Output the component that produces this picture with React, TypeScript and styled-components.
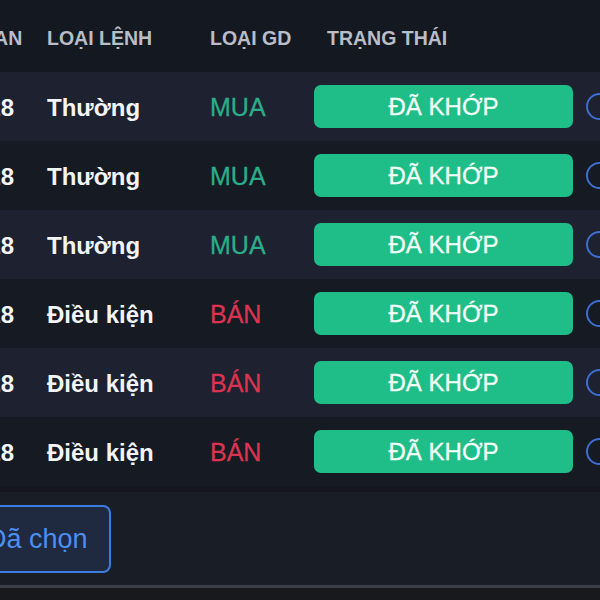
import styled, { createGlobalStyle } from 'styled-components';

const GlobalStyle = createGlobalStyle`
    html, body {
        margin: 0;
        padding: 0;
        background: #161a23;
        overflow: hidden;
    }
    * {
        box-sizing: border-box;
    }
`;

type Side = 'buy' | 'sell';

interface Order {
    time: string;
    kind: string;
    side: Side;
    status: string;
}

const orders: Order[] = [
    { time: '14:30:28', kind: 'Thường', side: 'buy', status: 'ĐÃ KHỚP' },
    { time: '14:30:28', kind: 'Thường', side: 'buy', status: 'ĐÃ KHỚP' },
    { time: '14:30:28', kind: 'Thường', side: 'buy', status: 'ĐÃ KHỚP' },
    { time: '14:30:28', kind: 'Điều kiện', side: 'sell', status: 'ĐÃ KHỚP' },
    { time: '14:30:28', kind: 'Điều kiện', side: 'sell', status: 'ĐÃ KHỚP' },
    { time: '14:30:28', kind: 'Điều kiện', side: 'sell', status: 'ĐÃ KHỚP' },
];

const Page = styled.div`
    width: 600px;
    height: 600px;
    display: flex;
    flex-direction: column;
    overflow: hidden;
    font-family: 'Liberation Sans', Arial, sans-serif;
`;

const Table = styled.div`
    display: flex;
    flex-direction: column;
    margin-left: -110px;
    width: 760px;
`;

const Grid = styled.div<{ $height: number; $bg: string }>`
    display: grid;
    grid-template-columns: 157px 163px 104px 272px 40px;
    align-items: center;
    height: ${props => props.$height}px;
    background: ${props => props.$bg};
`;

const HeadCell = styled.div<{ $pad?: number }>`
    padding-left: ${props => props.$pad || 0}px;
    color: #b9bdc7;
    font-size: 19.5px;
    font-weight: 700;
    white-space: nowrap;
    padding-top: 5px;
`;

const Cell = styled.div<{ $pad?: number }>`
    padding-left: ${props => props.$pad || 0}px;
    padding-top: 2px;
    color: #f2f4f7;
    font-size: 24px;
    font-weight: 700;
    white-space: nowrap;
`;

const SideCell = styled.div<{ $side: Side }>`
    color: ${props => (props.$side === 'buy' ? '#2aae8a' : '#db3450')};
    font-size: 25px;
    padding-top: 2px;
    white-space: nowrap;
    -webkit-text-stroke: 0.3px currentColor;
`;

const StatusBadge = styled.div`
    width: 259px;
    height: 43px;
    border-radius: 7px;
    background: #1fbe89;
    color: #f4fff9;
    font-size: 24px;
    display: flex;
    align-items: center;
    justify-content: center;
    -webkit-text-stroke: 0.3px currentColor;
`;

const Radio = styled.div`
    width: 27px;
    height: 27px;
    border-radius: 50%;
    border: 2px solid #3d6ed0;
`;

const Footer = styled.div`
    flex: 1;
    background: #191d26;
    border-top: 6px solid #14171f;
    padding-top: 13px;
    border-bottom: 3px solid #3a3e46;
`;

const SelectedButton = styled.button`
    margin-left: -37px;
    height: 68px;
    padding: 0 21px 0 22px;
    border: 2px solid #3b7de0;
    border-radius: 8px;
    background: #1f2940;
    color: #4b8ff0;
    font-family: 'Liberation Sans', Arial, sans-serif;
    font-size: 27px;
    cursor: pointer;
`;

const BottomStrip = styled.div`
    height: 12px;
    background: #18191d;
`;

export default function App() {
    return (
        <Page>
            <GlobalStyle />
            <Table>
                <Grid $height={72} $bg="#141921">
                    <HeadCell $pad={30}>THỜI GIAN</HeadCell>
                    <HeadCell>LOẠI LỆNH</HeadCell>
                    <HeadCell>LOẠI GD</HeadCell>
                    <HeadCell $pad={13}>TRẠNG THÁI</HeadCell>
                    <div />
                </Grid>
                {orders.map((order, i) => (
                    <Grid key={i} $height={69} $bg={i % 2 === 0 ? '#1d2130' : '#161a23'}>
                        <Cell $pad={28}>{order.time}</Cell>
                        <Cell>{order.kind}</Cell>
                        <SideCell $side={order.side}>{order.side === 'buy' ? 'MUA' : 'BÁN'}</SideCell>
                        <StatusBadge>{order.status}</StatusBadge>
                        <Radio />
                    </Grid>
                ))}
            </Table>
            <Footer>
                <SelectedButton>Đã chọn</SelectedButton>
            </Footer>
            <BottomStrip />
        </Page>
    );
}
